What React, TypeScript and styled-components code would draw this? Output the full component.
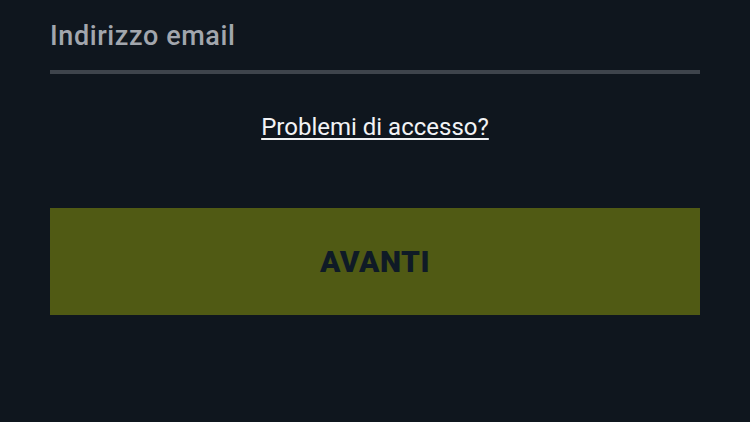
import React from "react";
import styled, { createGlobalStyle } from "styled-components";

export default function App() {
  return (
    <>
      <GlobalStyle />
      <Page>
        <Field>
          <Label>Indirizzo email</Label>
          <Underline />
        </Field>
        <HelpLink href="#">Problemi di accesso?</HelpLink>
        <NextButton type="button">AVANTI</NextButton>
      </Page>
    </>
  );
}

const GlobalStyle = createGlobalStyle`
  html, body {
    margin: 0;
    padding: 0;
    background: #0f161e;
  }
  body {
    font-family: "Roboto", "Liberation Sans", sans-serif;
  }
`;

const Page = styled.div`
  width: 750px;
  height: 422px;
  box-sizing: border-box;
  padding: 19px 50px 0;
  display: flex;
  flex-direction: column;
  align-items: stretch;
  background: #0f161e;
`;

const Field = styled.div`
  display: flex;
  flex-direction: column;
`;

const Label = styled.div`
  font-size: 27px;
  font-weight: 500;
  color: #a2a6ad;
  line-height: 34px;
  letter-spacing: 0.6px;
`;

const Underline = styled.div`
  height: 4px;
  margin-top: 17px;
  background: #3e444c;
`;

const HelpLink = styled.a`
  align-self: center;
  margin-top: 38px;
  font-size: 24px;
  line-height: 30px;
  color: #f2f3f5;
  text-decoration: underline;
  text-underline-offset: 3px;
  text-decoration-thickness: 2px;
`;

const NextButton = styled.button`
  margin-top: 66px;
  height: 107px;
  border: none;
  border-radius: 0;
  background: #505a14;
  color: #0f1a26;
  font-family: "Roboto", "Liberation Sans", sans-serif;
  font-size: 30px;
  font-weight: 900;
  letter-spacing: 0.5px;
  cursor: pointer;
`;
